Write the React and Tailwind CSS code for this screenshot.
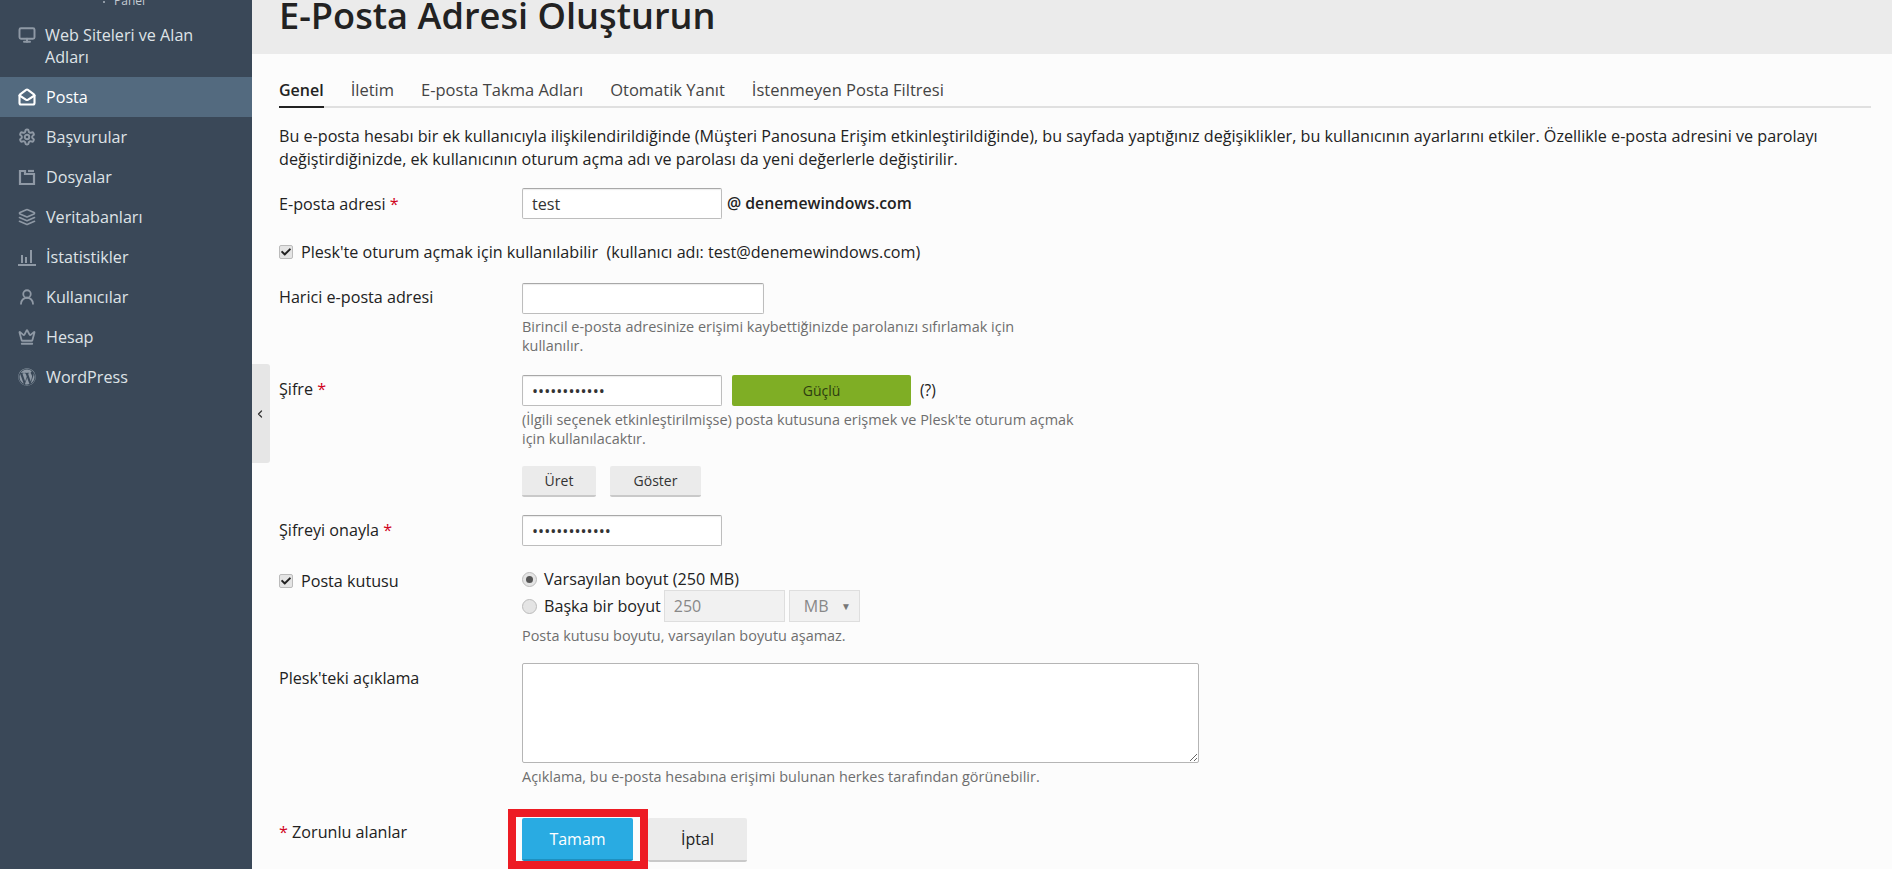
import React from "react";
import { FaWordpress, FaCheck } from "react-icons/fa";
import { LuMonitor, LuMailOpen, LuSettings, LuLayers, LuUserRound, LuCrown, LuChevronLeft } from "react-icons/lu";

const FolderIcon = ({ className }) => (
  <svg viewBox="0 0 18 18" className={className} fill="none" stroke="currentColor" strokeWidth="2.2">
    <path d="M2 3h5v3h9v10H2z" />
    <path d="M10 3h6" />
  </svg>
);
const StatsIcon = ({ className }) => (
  <svg viewBox="0 0 18 18" className={className} fill="currentColor">
    <rect x="3" y="7" width="2" height="8" />
    <rect x="7" y="9" width="2" height="6" />
    <rect x="12" y="2" width="2" height="13" />
    <rect x="0" y="16" width="18" height="2" />
  </svg>
);

const items = [
  { icon: LuSettings, label: "Başvurular", sw: 2.6 },
  { icon: FolderIcon, label: "Dosyalar" },
  { icon: LuLayers, label: "Veritabanları", sw: 2.2 },
  { icon: StatsIcon, label: "İstatistikler" },
  { icon: LuUserRound, label: "Kullanıcılar", sw: 2.4 },
  { icon: LuCrown, label: "Hesap", sw: 2.4 },
  { icon: FaWordpress, label: "WordPress" },
];

function Row({ label, children, className = "" }) {
  return (
    <div className={`flex ${className}`}>
      <div className="w-[243px] shrink-0">{label}</div>
      <div className="flex-1 min-w-0">{children}</div>
    </div>
  );
}

const Req = () => <span className="text-[#d0021b]"> *</span>;
const inputCls = "block h-[31px] bg-white border border-[#bdbdbd] border-t-[#a8a8a8] rounded-[2px] px-[9px] text-[16.15px] text-[#333] outline-none shadow-[inset_0_1px_1px_rgba(0,0,0,0.08)]";
const Hint = ({ children, className = "" }) => <div className={`text-[14.45px] leading-[19px] text-[#6e6e6e] ${className}`}>{children}</div>;
const GrayBtn = ({ children, className = "" }) => (
  <button className={`bg-[#ebebeb] border-b-2 border-[#c9c9c9] rounded-[2px] text-[14px] font-medium text-[#333] ${className}`}>{children}</button>
);
const Check = () => (
  <span className="w-[14px] h-[14px] bg-[#e4e4e4] border border-[#bbb] rounded-[2px] flex items-center justify-center shrink-0">
    <FaCheck className="w-[10px] h-[10px] text-[#222]" />
  </span>
);
const Radio = ({ on }) => (
  <span className="w-[15px] h-[15px] bg-[#e4e4e4] border border-[#bbb] rounded-full flex items-center justify-center shrink-0">
    {on && <span className="w-[7px] h-[7px] rounded-full bg-[#555]" />}
  </span>
);

export default function App() {
  return (
    <div className="relative flex h-[869px] w-[1892px] overflow-hidden bg-[#fcfcfc] text-[16.15px] text-[#222] font-['Open_Sans',sans-serif]">
      <aside className="w-[252px] shrink-0 bg-[#3a4858] text-[#dfe3e7] text-[16.15px]">
        <div className="h-[5px] relative">
          <span className="absolute left-[103px] top-[1px] w-[2px] h-[2px] bg-[#8f99a5]" />
          <span className="absolute left-[114px] top-[-8px] text-[12px] text-[#c5ccd3]">Panel</span>
        </div>
        <div className="flex items-start pl-[18px] pt-[19px] h-[72px] leading-[22px]">
          <LuMonitor className="w-[18px] h-[18px] mt-[2px] text-[#8f99a5] shrink-0" strokeWidth={2.6} />
          <span className="ml-[9px] w-[180px]">Web Siteleri ve Alan Adları</span>
        </div>
        <div className="flex items-center h-[40px] pl-[18px] bg-[#536a7f] text-white">
          <LuMailOpen className="w-[18px] h-[18px] shrink-0" strokeWidth={2.8} />
          <span className="ml-[10px]">Posta</span>
        </div>
        {items.map(({ icon: I, label, sw }) => (
          <div key={label} className="flex items-center h-[40px] pl-[18px]">
            <I className="w-[18px] h-[18px] text-[#8f99a5] shrink-0" strokeWidth={sw} />
            <span className="ml-[10px]">{label}</span>
          </div>
        ))}
      </aside>

      <div className="absolute left-[252px] top-[364px] w-[18px] h-[99px] bg-[#e6e6e6] rounded-r-[3px] flex items-center justify-center">
        <LuChevronLeft className="w-[12px] h-[12px] text-[#333] -ml-[2px]" strokeWidth={2.5} />
      </div>

      <main className="flex-1 min-w-0">
        <header className="h-[54px] bg-[#ebebeb] pl-[27px] overflow-hidden">
          <h1 className="text-[36.2px] leading-[30px] font-semibold text-[#222]">E-Posta Adresi Oluşturun</h1>
        </header>

        <div className="pl-[27px] pr-[21px]">
          <nav className="mt-[24px] flex gap-[27px] border-b-2 border-[#e0e0e0] h-[30px] text-[16.5px] leading-[24px] text-[#444]">
            <span className="h-[30px] border-b-2 border-[#222] text-[16px] font-semibold text-[#222]">Genel</span>
            <span>İletim</span>
            <span>E-posta Takma Adları</span>
            <span>Otomatik Yanıt</span>
            <span>İstenmeyen Posta Filtresi</span>
          </nav>

          <p className="mt-[17px] leading-[23px]">
            Bu e-posta hesabı bir ek kullanıcıyla ilişkilendirildiğinde (Müşteri Panosuna Erişim etkinleştirildiğinde), bu sayfada yaptığınız değişiklikler, bu kullanıcının ayarlarını etkiler. Özellikle e-posta adresini ve parolayı değiştirdiğinizde, ek kullanıcının oturum açma adı ve parolası da yeni değerlerle değiştirilir.
          </p>

          <Row className="mt-[17px] items-center" label={<div className="pt-[1px]">E-posta adresi<Req /></div>}>
            <div className="flex items-center">
              <input readOnly value="test" className={`${inputCls} w-[200px]`} />
              <span className="ml-[5px] text-[15.8px] font-semibold text-[#222]">@ denemewindows.com</span>
            </div>
          </Row>

          <div className="mt-[22px] flex items-center h-[22px]">
            <Check />
            <span className="ml-[8px]">Plesk'te oturum açmak için kullanılabilir&nbsp; (kullanıcı adı: test@denemewindows.com)</span>
          </div>

          <Row className="mt-[20px]" label={<div className="leading-[29px]">Harici e-posta adresi</div>}>
            <input readOnly className={`${inputCls} w-[242px]`} />
            <Hint className="mt-[3px] w-[510px]">Birincil e-posta adresinize erişimi kaybettiğinizde parolanızı sıfırlamak için kullanılır.</Hint>
          </Row>

          <Row className="mt-[20px]" label={<div className="leading-[29px]">Şifre<Req /></div>}>
            <div className="flex items-center">
              <input readOnly type="password" value="aaaaaaaaaaaa" className={`${inputCls} w-[200px]`} />
              <div className="ml-[10px] w-[179px] h-[31px] bg-[#7fae25] rounded-[2px] flex items-center justify-center text-[14px] text-[#2d3d10]">Güçlü</div>
              <span className="ml-[9px] text-[15.5px]">(?)</span>
            </div>
            <Hint className="mt-[4px] w-[570px]">(İlgili seçenek etkinleştirilmişse) posta kutusuna erişmek ve Plesk'te oturum açmak için kullanılacaktır.</Hint>
            <div className="mt-[18px] flex gap-[14px]">
              <GrayBtn className="w-[74px] h-[31px]">Üret</GrayBtn>
              <GrayBtn className="w-[91px] h-[31px]">Göster</GrayBtn>
            </div>
          </Row>

          <Row className="mt-[18px]" label={<div className="leading-[31px]">Şifreyi onayla<Req /></div>}>
            <input readOnly type="password" value="aaaaaaaaaaaaa" className={`${inputCls} w-[200px]`} />
          </Row>

          <Row
            className="mt-[22px]"
            label={
              <div className="flex items-center h-[22px] mt-[2px]">
                <Check />
                <span className="ml-[8px]">Posta kutusu</span>
              </div>
            }
          >
            <div className="flex items-center h-[22px]">
              <Radio on />
              <span className="ml-[7px]">Varsayılan boyut (250 MB)</span>
            </div>
            <div className="flex items-center h-[32px]">
              <Radio />
              <span className="ml-[7px]">Başka bir boyut</span>
              <input disabled value="250" className="ml-[3px] h-[32px] w-[121px] bg-[#f1f1f1] border border-[#dedede] px-[9px] text-[16px] text-[#888]" />
              <div className="ml-[4px] h-[32px] w-[71px] bg-[#f1f1f1] border border-[#dedede] flex items-center justify-between pl-[14px] pr-[8px] text-[16px] text-[#888]">
                <span>MB</span>
                <span className="text-[10px] text-[#777]">▼</span>
              </div>
            </div>
            <Hint className="mt-[4px]">Posta kutusu boyutu, varsayılan boyutu aşamaz.</Hint>
          </Row>

          <Row className="mt-[18px]" label={<div className="leading-[31px]">Plesk'teki açıklama</div>}>
            <textarea readOnly className="block w-[677px] h-[100px] bg-white border border-[#b5b5b5] rounded-[2px] outline-none" />
            <Hint className="mt-[4px]">Açıklama, bu e-posta hesabına erişimi bulunan herkes tarafından görünebilir.</Hint>
          </Row>

          <Row className="mt-[32px]" label={<div className="mt-[3px] leading-[22px]"><span className="text-[#d0021b]">*</span> Zorunlu alanlar</div>}>
            <div className="flex">
              <div className="relative w-[111px] h-[43px] bg-[#29abe2] border-b-2 border-[#1f8fbf] rounded-[2px] text-white font-medium text-[16px] flex items-center justify-center">
                Tamam
                <div className="absolute left-[-14px] top-[-9px] w-[140px] h-[60px] border-[8px] border-[#ed1c24] pointer-events-none" />
              </div>
              <button className="ml-[15px] w-[99px] h-[44px] bg-[#ebebeb] border-b-2 border-[#c9c9c9] rounded-[2px] text-[16px] font-medium text-[#222]">İptal</button>
            </div>
          </Row>
        </div>
      </main>
    </div>
  );
}
